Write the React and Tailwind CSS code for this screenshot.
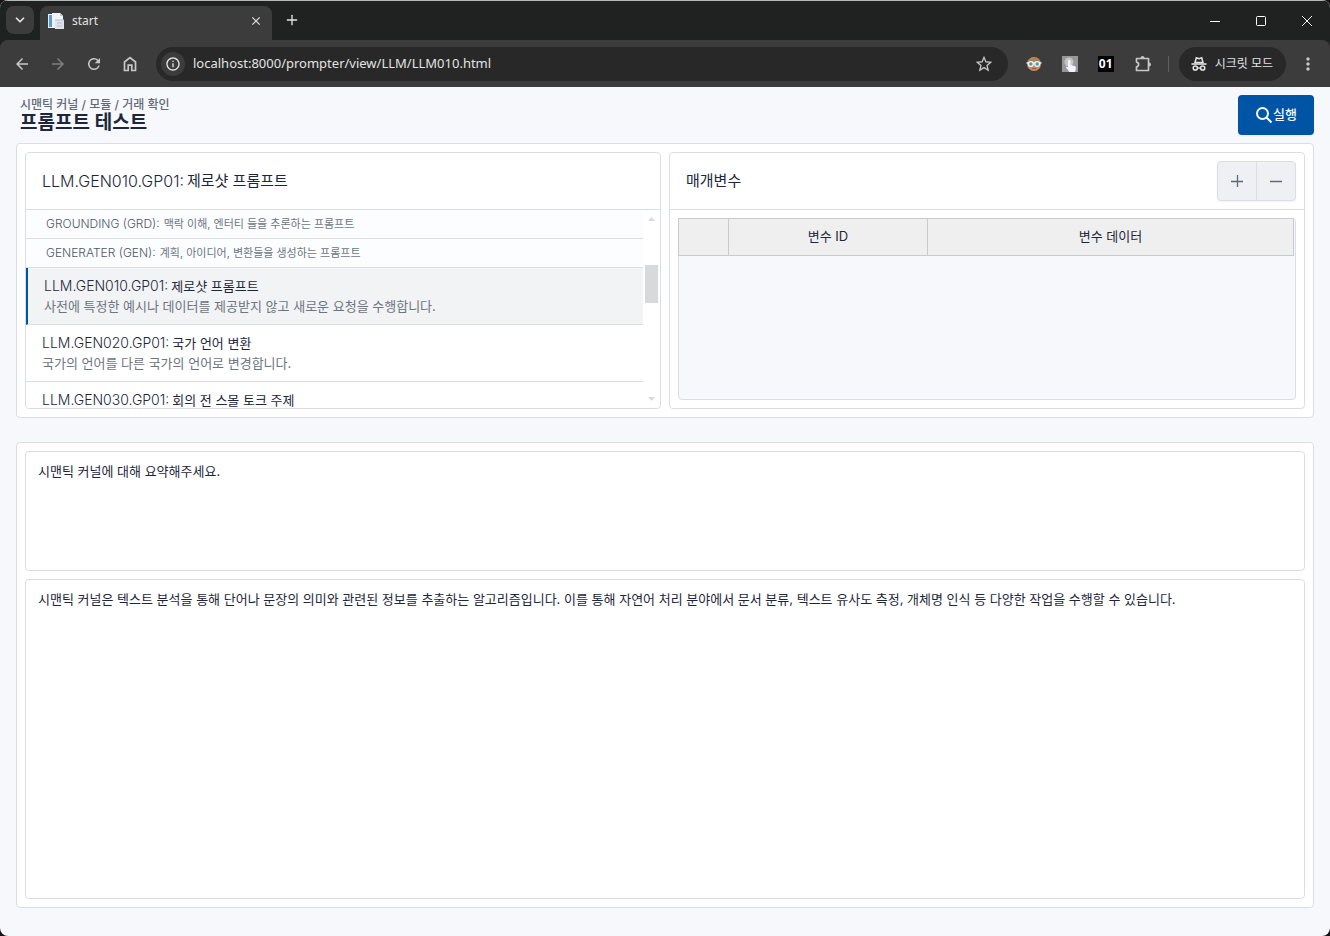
import React, { useState } from "react";
import {
  MdArrowBack,
  MdArrowForward,
  MdClose,
  MdInfoOutline,
  MdMoreVert,
  MdRefresh,
  MdStarBorder,
} from "react-icons/md";
import { ChevronDown, Plus } from "lucide-react";

const sections = [
  { id: "GROUNDING (GRD):", title: "맥락 이해, 엔터티 들을 추론하는 프롬프트" },
  { id: "GENERATER (GEN):", title: "계획, 아이디어, 변환들을 생성하는 프롬프트" },
];

const prompts = [
  {
    id: "LLM.GEN010.GP01:",
    title: "제로샷 프롬프트",
    description: "사전에 특정한 예시나 데이터를 제공받지 않고 새로운 요청을 수행합니다.",
  },
  {
    id: "LLM.GEN020.GP01:",
    title: "국가 언어 변환",
    description: "국가의 언어를 다른 국가의 언어로 변경합니다.",
  },
  {
    id: "LLM.GEN030.GP01:",
    title: "회의 전 스몰 토크 주제",
    description: "",
  },
];

const answer =
  "시맨틱 커널은 텍스트 분석을 통해 단어나 문장의 의미와 관련된 정보를 추출하는 알고리즘입니다. 이를 통해 자연어 처리 분야에서 문서 분류, 텍스트 유사도 측정, 개체명 인식 등 다양한 작업을 수행할 수 있습니다.";

function TabIcon() {
  return (
    <svg width="16" height="16" viewBox="0 0 16 16">
      <path d="M0 1h8v14H0z" fill="#e8edf2" />
      <path d="M1 2h3v12H1z" fill="#5b9bd0" />
      <path d="M4 0h8l3 3v12H4z" fill="#f0f3f7" />
      <path d="M12 0l3 3h-3z" fill="#c3cbd4" />
      <path d="M7 7h9v9H7z" fill="#dfe4ec" />
      <path d="M7 7h9M9 10h5M9 13h5" stroke="#b6c0cd" />
    </svg>
  );
}

function HomeIcon() {
  return (
    <svg width="18" height="18" viewBox="0 0 18 18" fill="none" stroke="currentColor" strokeWidth="1.700">
      <path d="M3.500 15.500v-8.500l5.500-4.300 5.500 4.300v8.500h-3.700v-5.300H7.200v5.300z" />
    </svg>
  );
}

function ExtensionIcon() {
  return (
    <svg width="18" height="18" viewBox="0 0 18 18">
      <path
        d="M2.500 3.500h12v12h-12v-3.700c2.800-.6 2.800-4.100 0-4.700z"
        fill="none"
        stroke="currentColor"
        strokeWidth="1.700"
        strokeLinejoin="round"
      />
      <path d="M6.500 3a2 2 0 0 1 4 0zM15 7.500a2 2 0 0 1 0 4z" fill="currentColor" />
    </svg>
  );
}

function FaceIcon() {
  return (
    <svg width="16" height="16" viewBox="0 0 16 16">
      <circle cx="8" cy="8" r="7" fill="#c98d66" />
      <path d="M1.500 6.500a6.700 6.700 0 0 1 13 0L12 5H4z" fill="#a98352" />
      <path d="M.5 7h15" stroke="#e8eef0" strokeWidth="1.500" />
      <circle cx="4.800" cy="8" r="2.400" fill="#4f9bb4" stroke="#edf3f4" strokeWidth="1.300" />
      <circle cx="11.200" cy="8" r="2.400" fill="#4f9bb4" stroke="#edf3f4" strokeWidth="1.300" />
      <path d="M6 12.500h4" stroke="#a9573f" strokeWidth="1.200" />
    </svg>
  );
}

function PointerIcon() {
  return (
    <svg width="16" height="16" viewBox="0 0 16 16">
      <path d="M0 0h16v16H0z" fill="#979797" />
      <circle cx="7" cy="6" r="4.500" fill="#c4c4c4" />
      <path
        d="M6 5a1.300 1.300 0 0 1 2.600 0v4l4 1c1 .3 1.400 1 1.200 2l-.6 4H7.500L4 11.500c0-1 1-1.200 2-.3z"
        fill="#f2f4f8"
      />
    </svg>
  );
}

function IncognitoIcon() {
  return (
    <svg width="16" height="16" viewBox="0 0 16 16" fill="none" stroke="#e3e3e3">
      <path d="M4 6.500l1.300-4.700 2.700.8 2.700-.8L12 6.500z" strokeWidth="1.500" />
      <path d="M.5 8h15" strokeWidth="1.600" />
      <circle cx="4.300" cy="12" r="2.100" strokeWidth="1.500" />
      <circle cx="11.700" cy="12" r="2.100" strokeWidth="1.500" />
      <path d="M6.400 12h3.200" strokeWidth="1.400" />
    </svg>
  );
}

function BrowserBar() {
  return (
    <div className="border-t border-[#b4bab7] bg-[#202221] text-[#e3e3e3] font-['Noto_Sans','Noto_Sans_CJK_KR',sans-serif]">
      <div className="flex h-[39px] items-end">
        <button
          aria-label="탭 검색"
          className="mb-[6px] ml-[6px] flex size-7 items-center justify-center rounded-lg bg-[#3c3c3c]"
        >
          <ChevronDown size={14} strokeWidth={3} />
        </button>
        <div className="ml-[6px] flex h-[34px] w-[232px] items-center rounded-t-lg bg-[#3c3c3c] pr-[9px] pb-1 pl-2">
          <TabIcon />
          <span className="ml-2 flex-1 text-[12px]">start</span>
          <button aria-label="탭 닫기">
            <MdClose size={14} />
          </button>
        </div>
        <button aria-label="새 탭" className="mb-3 ml-3">
          <Plus size={16} strokeWidth={2} />
        </button>
        <div className="ml-auto flex h-full items-center">
          <button aria-label="최소화" className="flex w-[46px] justify-center">
            <svg width="10" height="10" viewBox="0 0 10 10" stroke="#fff">
              <path d="M0 5.500h10" />
            </svg>
          </button>
          <button aria-label="최대화" className="flex w-[46px] justify-center">
            <svg width="10" height="10" viewBox="0 0 10 10" fill="none" stroke="#fff">
              <rect x=".5" y=".5" width="9" height="9" rx="1" />
            </svg>
          </button>
          <button aria-label="닫기" className="flex w-[46px] justify-center">
            <svg width="10" height="10" viewBox="0 0 10 10" stroke="#fff">
              <path d="M0 0l10 10M10 0L0 10" />
            </svg>
          </button>
        </div>
      </div>
      <div className="flex h-[47px] items-center rounded-t-lg bg-[#3c3c3c] pr-3 text-[#c7c7c7]">
        <div className="flex w-[156px] items-center gap-[18px] pl-[13px]">
          <button aria-label="뒤로">
            <MdArrowBack size={18} />
          </button>
          <button aria-label="앞으로" className="text-[#7f7f7f]">
            <MdArrowForward size={18} />
          </button>
          <button aria-label="새로고침">
            <MdRefresh size={18} />
          </button>
          <button aria-label="홈">
            <HomeIcon />
          </button>
        </div>
        <div className="flex h-[34px] flex-1 items-center rounded-full bg-[#282828] pr-[14px] pl-[5px]">
          <span className="flex size-6 items-center justify-center rounded-full bg-[#3c3c3c] text-[#e3e3e3]">
            <MdInfoOutline size={16} />
          </span>
          <input
            aria-label="주소"
            className="ml-2 flex-1 bg-transparent text-[13px] text-[#e3e3e3] outline-none"
            defaultValue="localhost:8000/prompter/view/LLM/LLM010.html"
          />
          <button aria-label="북마크">
            <MdStarBorder size={20} />
          </button>
        </div>
        <div className="ml-[18px] flex items-center gap-5">
          <FaceIcon />
          <PointerIcon />
          <span className="flex size-4 items-center justify-center bg-black text-[12px] font-bold text-white">
            01
          </span>
          <ExtensionIcon />
        </div>
        <div className="ml-4 h-4 w-px bg-[#5f5f5f]" />
        <button className="ml-[10px] flex h-[34px] items-center gap-2 rounded-full bg-[#282828] pr-[13px] pl-3 text-[12px] text-[#e3e3e3]">
          <IncognitoIcon />
          시크릿 모드
        </button>
        <button aria-label="메뉴" className="ml-3">
          <MdMoreVert size={20} />
        </button>
      </div>
    </div>
  );
}

function PromptList() {
  const [selected, setSelected] = useState(prompts[0].id);

  return (
    <div className="flex h-[198px]">
      <div className="flex-1 overflow-hidden">
        {sections.map((section) => (
          <div
            key={section.id}
            className="flex gap-1 border-b border-[#dadde3] bg-[#fcfdfe] px-5 py-1 text-[11px] leading-5 text-[#6c7582]"
          >
            <span className="text-[12px] font-light text-[#4f5663]">{section.id}</span>
            <span>{section.title}</span>
          </div>
        ))}
        {prompts.map((prompt) => (
          <button
            key={prompt.id}
            onClick={() => setSelected(prompt.id)}
            className={`block w-full border-b border-b-[#dadde3] px-4 py-2 text-left text-[13px] leading-5 ${
              selected === prompt.id
                ? "border-l-2 border-l-[#0054a6] bg-[#f2f3f5]"
                : "bg-white"
            }`}
          >
            <div className="flex h-5 items-center gap-[3px]">
              <span className="text-[14px] font-light">{prompt.id}</span>
              <span>{prompt.title}</span>
            </div>
            <div className="text-[#6c7582]">{prompt.description}</div>
          </button>
        ))}
      </div>
      <div className="flex w-[17px] flex-col items-center justify-between py-[7px]">
        <svg width="7" height="4" viewBox="0 0 7 4" fill="#d8d9db">
          <path d="M0 4l3.500-4L7 4z" />
        </svg>
        <div className="mt-[44px] mb-auto h-[38px] w-[13px] bg-[#d8d9db]" />
        <svg width="7" height="4" viewBox="0 0 7 4" fill="#d8d9db">
          <path d="M0 0l3.500 4L7 0z" />
        </svg>
      </div>
    </div>
  );
}

function Parameters() {
  return (
    <div className="flex flex-1 flex-col rounded-[4px] border border-[#dadde3]">
      <div className="flex items-center justify-between border-b border-[#dadde3] py-2 pr-2 pl-4">
        <h3 className="text-[15px] leading-6">매개변수</h3>
        <div className="flex h-10 rounded-[4px] border border-[#dadde3] bg-[#eef0f3] text-[#626976] shadow-xs">
          <button
            aria-label="행 추가"
            className="flex w-[39px] items-center justify-center border-r border-[#dadde3]"
          >
            <svg width="12" height="12" viewBox="0 0 12 12" stroke="currentColor" strokeWidth="1.300">
              <path d="M0 6.500h12M6.500 0v12" />
            </svg>
          </button>
          <button aria-label="행 삭제" className="flex w-[38px] items-center justify-center">
            <svg width="12" height="12" viewBox="0 0 12 12" stroke="currentColor" strokeWidth="1.300">
              <path d="M0 6.500h12" />
            </svg>
          </button>
        </div>
      </div>
      <div className="m-2 flex-1 rounded-[4px] border border-[#dadde3] bg-[#f6f8fc]">
        <table className="-mt-px -ml-px w-full table-fixed border-collapse bg-[#efefef] text-[13px]">
          <thead>
            <tr className="h-[37px]">
              <th className="w-[50px] border border-[#c8cacc]"></th>
              <th className="w-[199px] border border-[#c8cacc] font-normal">변수 ID</th>
              <th className="border border-[#c8cacc] font-normal">변수 데이터</th>
            </tr>
          </thead>
        </table>
      </div>
    </div>
  );
}

export default function App() {
  const [question, setQuestion] = useState("시맨틱 커널에 대해 요약해주세요.");

  return (
    <div className="min-h-screen bg-[#181415]">
      <div className="flex min-h-screen flex-col overflow-hidden rounded-lg bg-[#f6f8fc]">
        <BrowserBar />
        <main className="flex flex-1 flex-col px-4 pt-2 pb-7 text-[#1d273b] font-['Inter','Noto_Sans_CJK_KR',sans-serif]">
          <div className="flex h-10 items-center justify-between">
            <div className="pl-1">
              <div className="text-[12px] leading-4 font-medium text-[#626976]">
                시맨틱 커널 / 모듈 / 거래 확인
              </div>
              <h2 className="text-[19px] leading-5 font-semibold">프롬프트 테스트</h2>
            </div>
            <button className="flex h-10 items-center rounded-[4px] bg-[#0054a6] px-[17px] text-[13px] font-medium text-[#f8fafc] shadow-xs">
              <svg
                width="18"
                height="18"
                viewBox="0 0 18 18"
                fill="none"
                stroke="currentColor"
                strokeWidth="2"
              >
                <circle cx="7.500" cy="7.500" r="5.500" />
                <path d="M11.500 11.500l5 5" />
              </svg>
              실행
            </button>
          </div>

          <section className="mt-2 flex gap-2 rounded-[4px] border border-[#dadde3] bg-white p-2">
            <div className="flex-1 overflow-hidden rounded-[4px] border border-[#dadde3]">
              <h3 className="flex items-center gap-[3px] border-b border-[#dadde3] p-4 text-[15px] leading-6">
                <span className="text-[16px] font-light">{prompts[0].id}</span>
                <span>{prompts[0].title}</span>
              </h3>
              <PromptList />
            </div>
            <Parameters />
          </section>

          <section className="mt-6 flex flex-1 flex-col gap-2 rounded-[4px] border border-[#dadde3] bg-white p-2">
            <textarea
              aria-label="질문"
              className="block h-[120px] w-full resize-none rounded-[4px] border border-[#dadde3] px-3 py-[9px] text-[13px] leading-5 outline-none"
              value={question}
              onChange={(e) => setQuestion(e.target.value)}
            />
            <textarea
              aria-label="답변"
              readOnly
              className="block w-full flex-1 resize-none rounded-[4px] border border-[#dadde3] px-3 py-[9px] text-[13px] leading-5 outline-none"
              value={answer}
            />
          </section>
        </main>
      </div>
    </div>
  );
}
